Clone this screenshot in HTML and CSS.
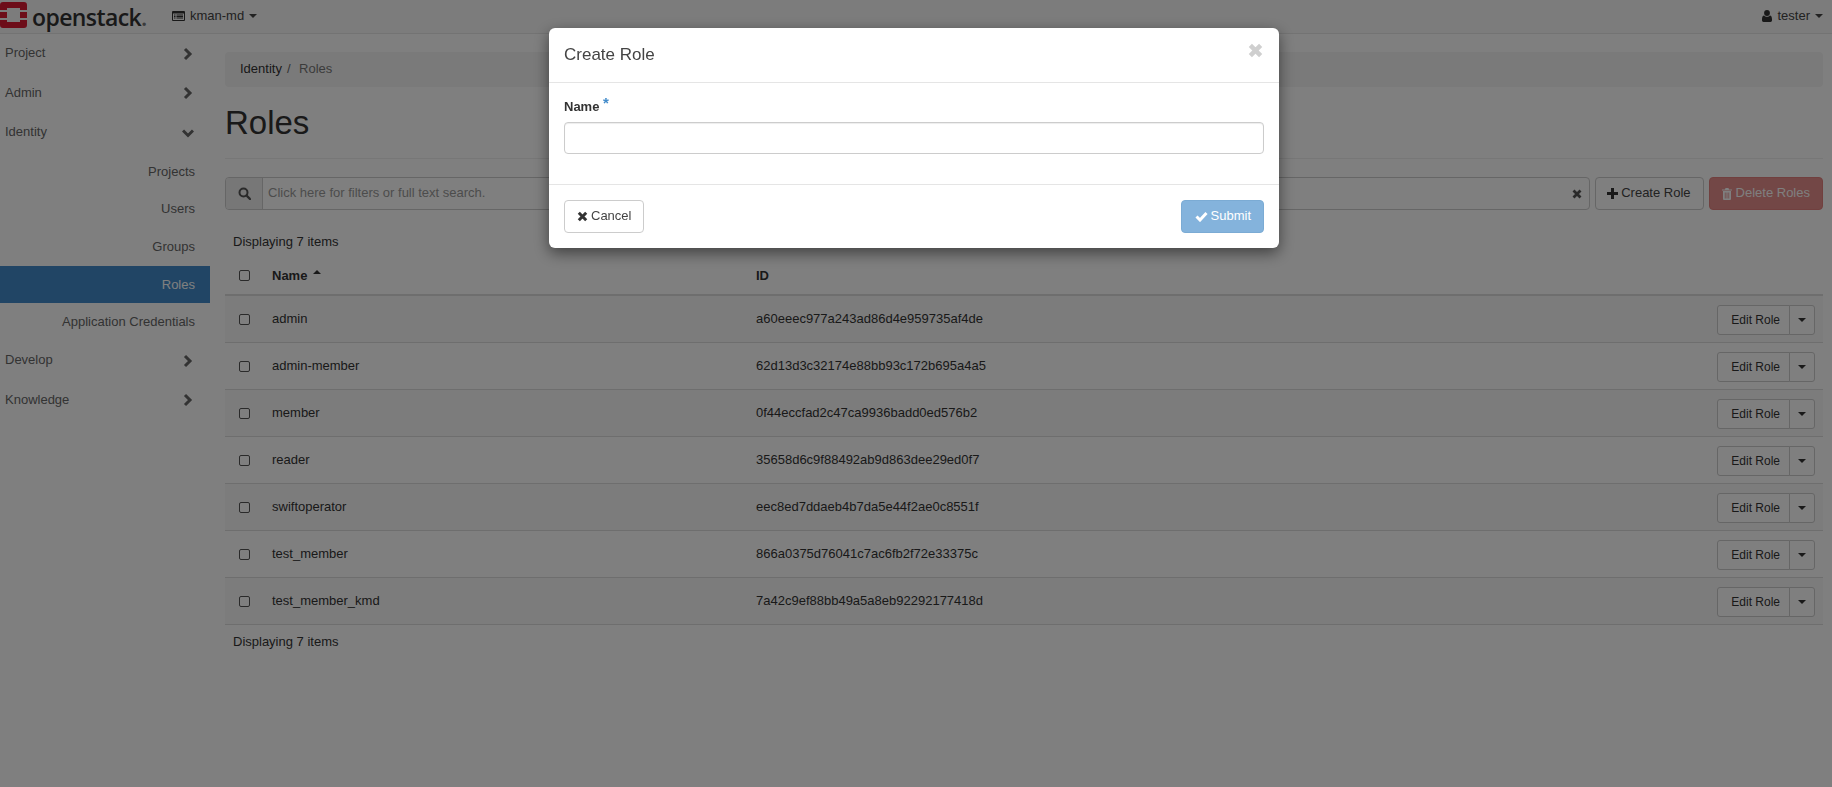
FILE: index.html
```html
<!DOCTYPE html>
<html lang="en">
<head>
    <meta charset="UTF-8">
    <title>Create Role - OpenStack Dashboard</title>
    <link rel="stylesheet" href="styles.css">
</head>
<body>
    <!-- Top bar -->
    <nav class="navbar">
        <div class="brand">
            <svg class="logo" width="27" height="26" viewBox="0 0 27 26">
                <path fill="#da1a32" d="M3 0H24a3 3 0 0 1 3 3V8H20V6H7V8H0V3a3 3 0 0 1 3-3zM0 10H7V16H0zM20 10H27V16H20zM0 18H7V20H20V18H27V23a3 3 0 0 1-3 3H3a3 3 0 0 1-3-3z"/>
            </svg>
            <span class="wordmark">openstack<span class="wordmark-dot">.</span></span>
        </div>
        <div class="project-picker">
            <svg width="13" height="10" viewBox="0 0 13 10"><path fill="#333" fill-rule="evenodd" d="M1 0H12a1 1 0 0 1 1 1V9a1 1 0 0 1-1 1H1a1 1 0 0 1-1-1V1a1 1 0 0 1 1-1zM1 2.500V9H12V2.500zM2 3.500H3.500V4.500H2zM4.500 3.500H11V4.500H4.500zM2 5H3.500V6H2zM4.500 5H11V6H4.500zM2 6.500H3.500V7.500H2zM4.500 6.500H11V7.500H4.500z"/></svg>
            <span>kman-md</span>
            <span class="caret"></span>
        </div>
        <div class="user-menu">
            <svg width="10" height="12" viewBox="0 0 11 13"><path fill="#333" d="M5.500 0a3.200 3.200 0 1 1 0 6.400a3.200 3.200 0 0 1 0-6.400zM2.300 6C3 7 4.200 7.400 5.500 7.400S8 7 8.700 6C10.200 6.200 11 7.500 11 10V11.200C11 12.300 10.300 13 9.300 13H1.700C.7 13 0 12.300 0 11.200V10C0 7.500.8 6.200 2.300 6z"/></svg>
            <span>tester</span>
            <span class="caret"></span>
        </div>
    </nav>

    <div class="page">
        <!-- Sidebar -->
        <aside class="sidebar">
            <div class="nav-top"><span>Project</span><svg class="chev" width="12" height="14" viewBox="0 0 12 14"><path d="M3 2l5 5l-5 5" /></svg></div>
            <div class="nav-top"><span>Admin</span><svg class="chev" width="12" height="14" viewBox="0 0 12 14"><path d="M3 2l5 5l-5 5" /></svg></div>
            <div class="nav-top"><span>Identity</span><svg class="chev" width="12" height="14" viewBox="0 0 12 14"><path d="M1 4.500l5 5l5-5" /></svg></div>
            <div class="nav-sub">Projects</div>
            <div class="nav-sub">Users</div>
            <div class="nav-sub">Groups</div>
            <div class="nav-sub active">Roles</div>
            <div class="nav-sub">Application Credentials</div>
            <div class="nav-top"><span>Develop</span><svg class="chev" width="12" height="14" viewBox="0 0 12 14"><path d="M3 2l5 5l-5 5" /></svg></div>
            <div class="nav-top"><span>Knowledge</span><svg class="chev" width="12" height="14" viewBox="0 0 12 14"><path d="M3 2l5 5l-5 5" /></svg></div>
        </aside>

        <!-- Main content -->
        <main class="content">
            <div class="breadcrumb"><span>Identity</span><span class="sep">/</span><span class="crumb-current">Roles</span></div>
            <h1 class="page-title">Roles</h1>

            <div class="toolbar">
                <div class="search">
                    <span class="search-addon">
                        <svg width="13" height="13" viewBox="0 0 13 13"><circle cx="5.500" cy="5.500" r="4" fill="none" stroke="#555" stroke-width="2"/><path d="M8.500 8.500L12 12" stroke="#555" stroke-width="2.400" stroke-linecap="round"/></svg>
                    </span>
                    <span class="search-text">Click here for filters or full text search.</span>
                    <svg class="search-clear" width="10" height="10" viewBox="0 0 10 10"><path d="M1.500 1.500L8.500 8.500M8.500 1.500L1.500 8.500" stroke="#555" stroke-width="2.800"/></svg>
                </div>
                <button class="btn btn-create">
                    <svg width="11" height="11" viewBox="0 0 11 11"><path d="M5.500 0V11M0 5.500H11" stroke="#333" stroke-width="3"/></svg>
                    Create Role
                </button>
                <button class="btn btn-danger">
                    <svg class="trash" width="10" height="12" viewBox="0 0 10 12"><path fill="#fff" fill-rule="evenodd" d="M3.500 0H6.500L7 1.500H10V2.500H0V1.500H3zM1 3H9V11a1 1 0 0 1-1 1H2a1 1 0 0 1-1-1zM2.800 4.500V10.500H3.600V4.500zM4.600 4.500V10.500H5.400V4.500zM6.400 4.500V10.500H7.200V4.500z"/></svg>
                    Delete Roles
                </button>
            </div>

            <table class="table">
                <thead>
                    <tr class="count-row"><th colspan="4">Displaying 7 items</th></tr>
                    <tr class="head-row">
                        <th class="col-check"><span class="check"></span></th>
                        <th class="col-name">Name <span class="sort-up"></span></th>
                        <th>ID</th>
                        <th></th>
                    </tr>
                </thead>
                <tbody>
                    <tr>
                        <td class="col-check"><span class="check"></span></td>
                        <td class="col-name">admin</td>
                        <td>a60eeec977a243ad86d4e959735af4de</td>
                        <td class="col-actions"><div class="btn-split"><span class="split-main">Edit Role</span><span class="split-toggle"><span class="caret"></span></span></div></td>
                    </tr>
                    <tr>
                        <td class="col-check"><span class="check"></span></td>
                        <td class="col-name">admin-member</td>
                        <td>62d13d3c32174e88bb93c172b695a4a5</td>
                        <td class="col-actions"><div class="btn-split"><span class="split-main">Edit Role</span><span class="split-toggle"><span class="caret"></span></span></div></td>
                    </tr>
                    <tr>
                        <td class="col-check"><span class="check"></span></td>
                        <td class="col-name">member</td>
                        <td>0f44eccfad2c47ca9936badd0ed576b2</td>
                        <td class="col-actions"><div class="btn-split"><span class="split-main">Edit Role</span><span class="split-toggle"><span class="caret"></span></span></div></td>
                    </tr>
                    <tr>
                        <td class="col-check"><span class="check"></span></td>
                        <td class="col-name">reader</td>
                        <td>35658d6c9f88492ab9d863dee29ed0f7</td>
                        <td class="col-actions"><div class="btn-split"><span class="split-main">Edit Role</span><span class="split-toggle"><span class="caret"></span></span></div></td>
                    </tr>
                    <tr>
                        <td class="col-check"><span class="check"></span></td>
                        <td class="col-name">swiftoperator</td>
                        <td>eec8ed7ddaeb4b7da5e44f2ae0c8551f</td>
                        <td class="col-actions"><div class="btn-split"><span class="split-main">Edit Role</span><span class="split-toggle"><span class="caret"></span></span></div></td>
                    </tr>
                    <tr>
                        <td class="col-check"><span class="check"></span></td>
                        <td class="col-name">test_member</td>
                        <td>866a0375d76041c7ac6fb2f72e33375c</td>
                        <td class="col-actions"><div class="btn-split"><span class="split-main">Edit Role</span><span class="split-toggle"><span class="caret"></span></span></div></td>
                    </tr>
                    <tr>
                        <td class="col-check"><span class="check"></span></td>
                        <td class="col-name">test_member_kmd</td>
                        <td>7a42c9ef88bb49a5a8eb92292177418d</td>
                        <td class="col-actions"><div class="btn-split"><span class="split-main">Edit Role</span><span class="split-toggle"><span class="caret"></span></span></div></td>
                    </tr>
                </tbody>
            </table>
            <div class="count-foot">Displaying 7 items</div>
        </main>
    </div>

    <!-- Modal -->
    <div class="backdrop"></div>
    <div class="modal">
        <div class="modal-header">
            <h3>Create Role</h3>
            <svg class="modal-close" width="15" height="15" viewBox="0 0 14 14"><path d="M2.200 2.200L11.800 11.800M11.800 2.200L2.200 11.800" stroke="#cfcfcf" stroke-width="4.200"/></svg>
        </div>
        <div class="modal-body">
            <label class="field-label">Name <span class="req">*</span></label>
            <div class="field-input"></div>
        </div>
        <div class="modal-footer">
            <button class="btn btn-cancel">
                <svg width="11" height="11" viewBox="0 0 11 11"><path d="M1.800 1.800L9.200 9.200M9.200 1.800L1.800 9.200" stroke="#333" stroke-width="3"/></svg>
                Cancel
            </button>
            <button class="btn btn-submit">
                <svg width="13" height="11" viewBox="0 0 13 11"><path d="M1.500 5.500L5 9L11.500 2" fill="none" stroke="#fff" stroke-width="3"/></svg>
                Submit
            </button>
        </div>
    </div>
</body>
</html>
```

FILE: styles.css
```css
* {
    box-sizing: border-box;
}
html, body {
    height: 100%;
}
body {
    margin: 0;
    font-family: "Liberation Sans", Arial, sans-serif;
    font-size: 13px;
    line-height: 1.43;
    color: #333;
    background: #fff;
    overflow: hidden;
}

/* Top bar */
.navbar {
    display: flex;
    align-items: center;
    height: 34px;
    background: #f8f8f8;
    border-bottom: 1px solid #e7e7e7;
    padding-right: 9px;
}
.brand {
    display: flex;
    align-items: center;
    width: 172px;
    height: 33px;
}
.logo {
    align-self: flex-start;
    margin-top: 2px;
    flex: none;
}
.wordmark {
    font-family: "Open Sans", sans-serif;
    font-size: 23px;
    font-weight: 600;
    line-height: 28px;
    letter-spacing: -0.6px;
    margin-left: 5px;
    color: #333;
}
.wordmark-dot {
    color: #777;
}
.project-picker, .user-menu {
    display: flex;
    align-items: center;
    gap: 5px;
    color: #444;
}
.user-menu {
    margin-left: auto;
}
.caret {
    display: inline-block;
    width: 0;
    height: 0;
    border-top: 4px solid currentColor;
    border-left: 4px solid transparent;
    border-right: 4px solid transparent;
}

.page {
    display: flex;
}

/* Sidebar */
.sidebar {
    width: 210px;
    flex: none;
}
.nav-top {
    display: flex;
    justify-content: space-between;
    align-items: center;
    height: 39.500px;
    padding: 0 16px 0 5px;
    color: #666;
}
.chev path {
    fill: none;
    stroke: #666;
    stroke-width: 3;
}
.nav-sub {
    height: 37.700px;
    line-height: 37.700px;
    text-align: right;
    padding-right: 15px;
    color: #666;
}
.nav-sub.active {
    background: #428bca;
    color: #fff;
}

/* Main content */
.content {
    flex: 1;
    padding: 18px 9px 0 15px;
    min-width: 0;
}
.breadcrumb {
    display: flex;
    height: 35px;
    align-items: center;
    padding: 0 15px;
    background: #f5f5f5;
    border-radius: 4px;
}
.breadcrumb .sep {
    margin: 0 5px;
    color: #666;
}
.crumb-current {
    color: #777;
    margin-left: 3.500px;
}
.page-title {
    margin: 18px 0 0;
    height: 54px;
    font-size: 33px;
    font-weight: 400;
    line-height: 36px;
    border-bottom: 1px solid #eee;
}
.toolbar {
    display: flex;
    gap: 5px;
    margin-top: 18px;
}
.search {
    flex: 1;
    display: flex;
    align-items: center;
    height: 33px;
    background: #fff;
    border: 1px solid #ccc;
    border-radius: 4px;
    color: #999;
}
.search-addon {
    display: flex;
    align-items: center;
    justify-content: center;
    width: 37px;
    height: 31px;
    background: #eee;
    border-right: 1px solid #ccc;
    border-radius: 3px 0 0 3px;
}
.search-text {
    flex: 1;
    padding: 0 5px;
}
.search-clear {
    margin-right: 7px;
}
.btn {
    display: inline-flex;
    align-items: center;
    gap: 3px;
    height: 33px;
    padding: 0 12px;
    font: inherit;
    color: #444;
    background: #fff;
    border: 1px solid #ccc;
    border-radius: 4px;
}
.btn-create {
    padding-left: 11px;
}
.btn-danger {
    background: #d9534f;
    border-color: #d43f3a;
    color: #fff;
    opacity: 0.65;
}
.trash {
    margin-right: 1px;
}

/* Table */
.table {
    width: 100%;
    border-collapse: collapse;
    margin-top: 16px;
}
.table th, .table td {
    padding: 0 8px;
    text-align: left;
}
.count-row th {
    height: 32px;
    font-weight: 400;
}
.table .head-row th {
    height: 37px;
    padding-top: 1px;
    border-bottom: 2px solid #ddd;
    font-weight: 700;
}
.table tbody tr {
    height: 47px;
}
.table tbody td {
    padding-top: 2px;
    border-bottom: 1px solid #ddd;
}
.table tbody tr:nth-child(odd) {
    background: #f9f9f9;
}
.col-check {
    width: 39px;
}
.table .col-name {
    width: 484px;
}
.check {
    display: block;
    width: 11px;
    height: 11px;
    margin: 0 0 1px 6px;
    background: #fff;
    border: 1px solid #555;
    border-radius: 2px;
}
.head-row .check {
    margin: 0 0 2px 6px;
}
.sort-up {
    display: inline-block;
    width: 0;
    height: 0;
    margin: 0 0 6px 2px;
    border-bottom: 4px solid #333;
    border-left: 4px solid transparent;
    border-right: 4px solid transparent;
}
.table .col-actions {
    padding: 2px 8px 0 0;
}
.btn-split {
    display: flex;
    justify-content: flex-end;
    height: 30px;
    font-size: 12px;
    line-height: 28px;
}
.split-main, .split-toggle {
    border: 1px solid #ccc;
    background: #fff;
}
.split-main {
    padding: 0 9px 0 13px;
    border-radius: 3px 0 0 3px;
}
.split-toggle {
    display: flex;
    align-items: center;
    padding: 0 8px;
    margin-left: -1px;
    border-radius: 0 3px 3px 0;
}
.count-foot {
    padding: 8px;
}

/* Modal */
.backdrop {
    position: fixed;
    inset: 0;
    background: #000;
    opacity: 0.5;
}
.modal {
    position: fixed;
    top: 28px;
    left: 549px;
    width: 730px;
    height: 220px;
    display: flex;
    flex-direction: column;
    background: #fff;
    border-radius: 6px;
    box-shadow: 0 5px 15px rgba(0, 0, 0, 0.5);
}
.modal-header {
    position: relative;
    height: 55px;
    padding: 15px;
    border-bottom: 1px solid #e5e5e5;
}
.modal-header h3 {
    margin: 0;
    font-size: 17px;
    font-weight: 400;
    line-height: 24px;
    color: #444;
}
.modal-close {
    position: absolute;
    top: 15px;
    right: 16px;
}
.modal-body {
    flex: 1;
    padding: 15px;
}
.field-label {
    display: block;
    font-weight: 700;
    height: 24px;
}
.req {
    color: #428bca;
    font-size: 15px;
    line-height: 0;
    vertical-align: 3px;
}
.field-input {
    height: 32px;
    border: 1px solid #ccc;
    border-radius: 4px;
    box-shadow: inset 0 1px 1px rgba(0, 0, 0, 0.075);
}
.modal-footer {
    display: flex;
    justify-content: space-between;
    height: 64px;
    padding: 15px;
    border-top: 1px solid #e5e5e5;
}
.btn-submit {
    padding-left: 13px;
    background: #428bca;
    border-color: #357ebd;
    color: #fff;
    opacity: 0.65;
}
```
